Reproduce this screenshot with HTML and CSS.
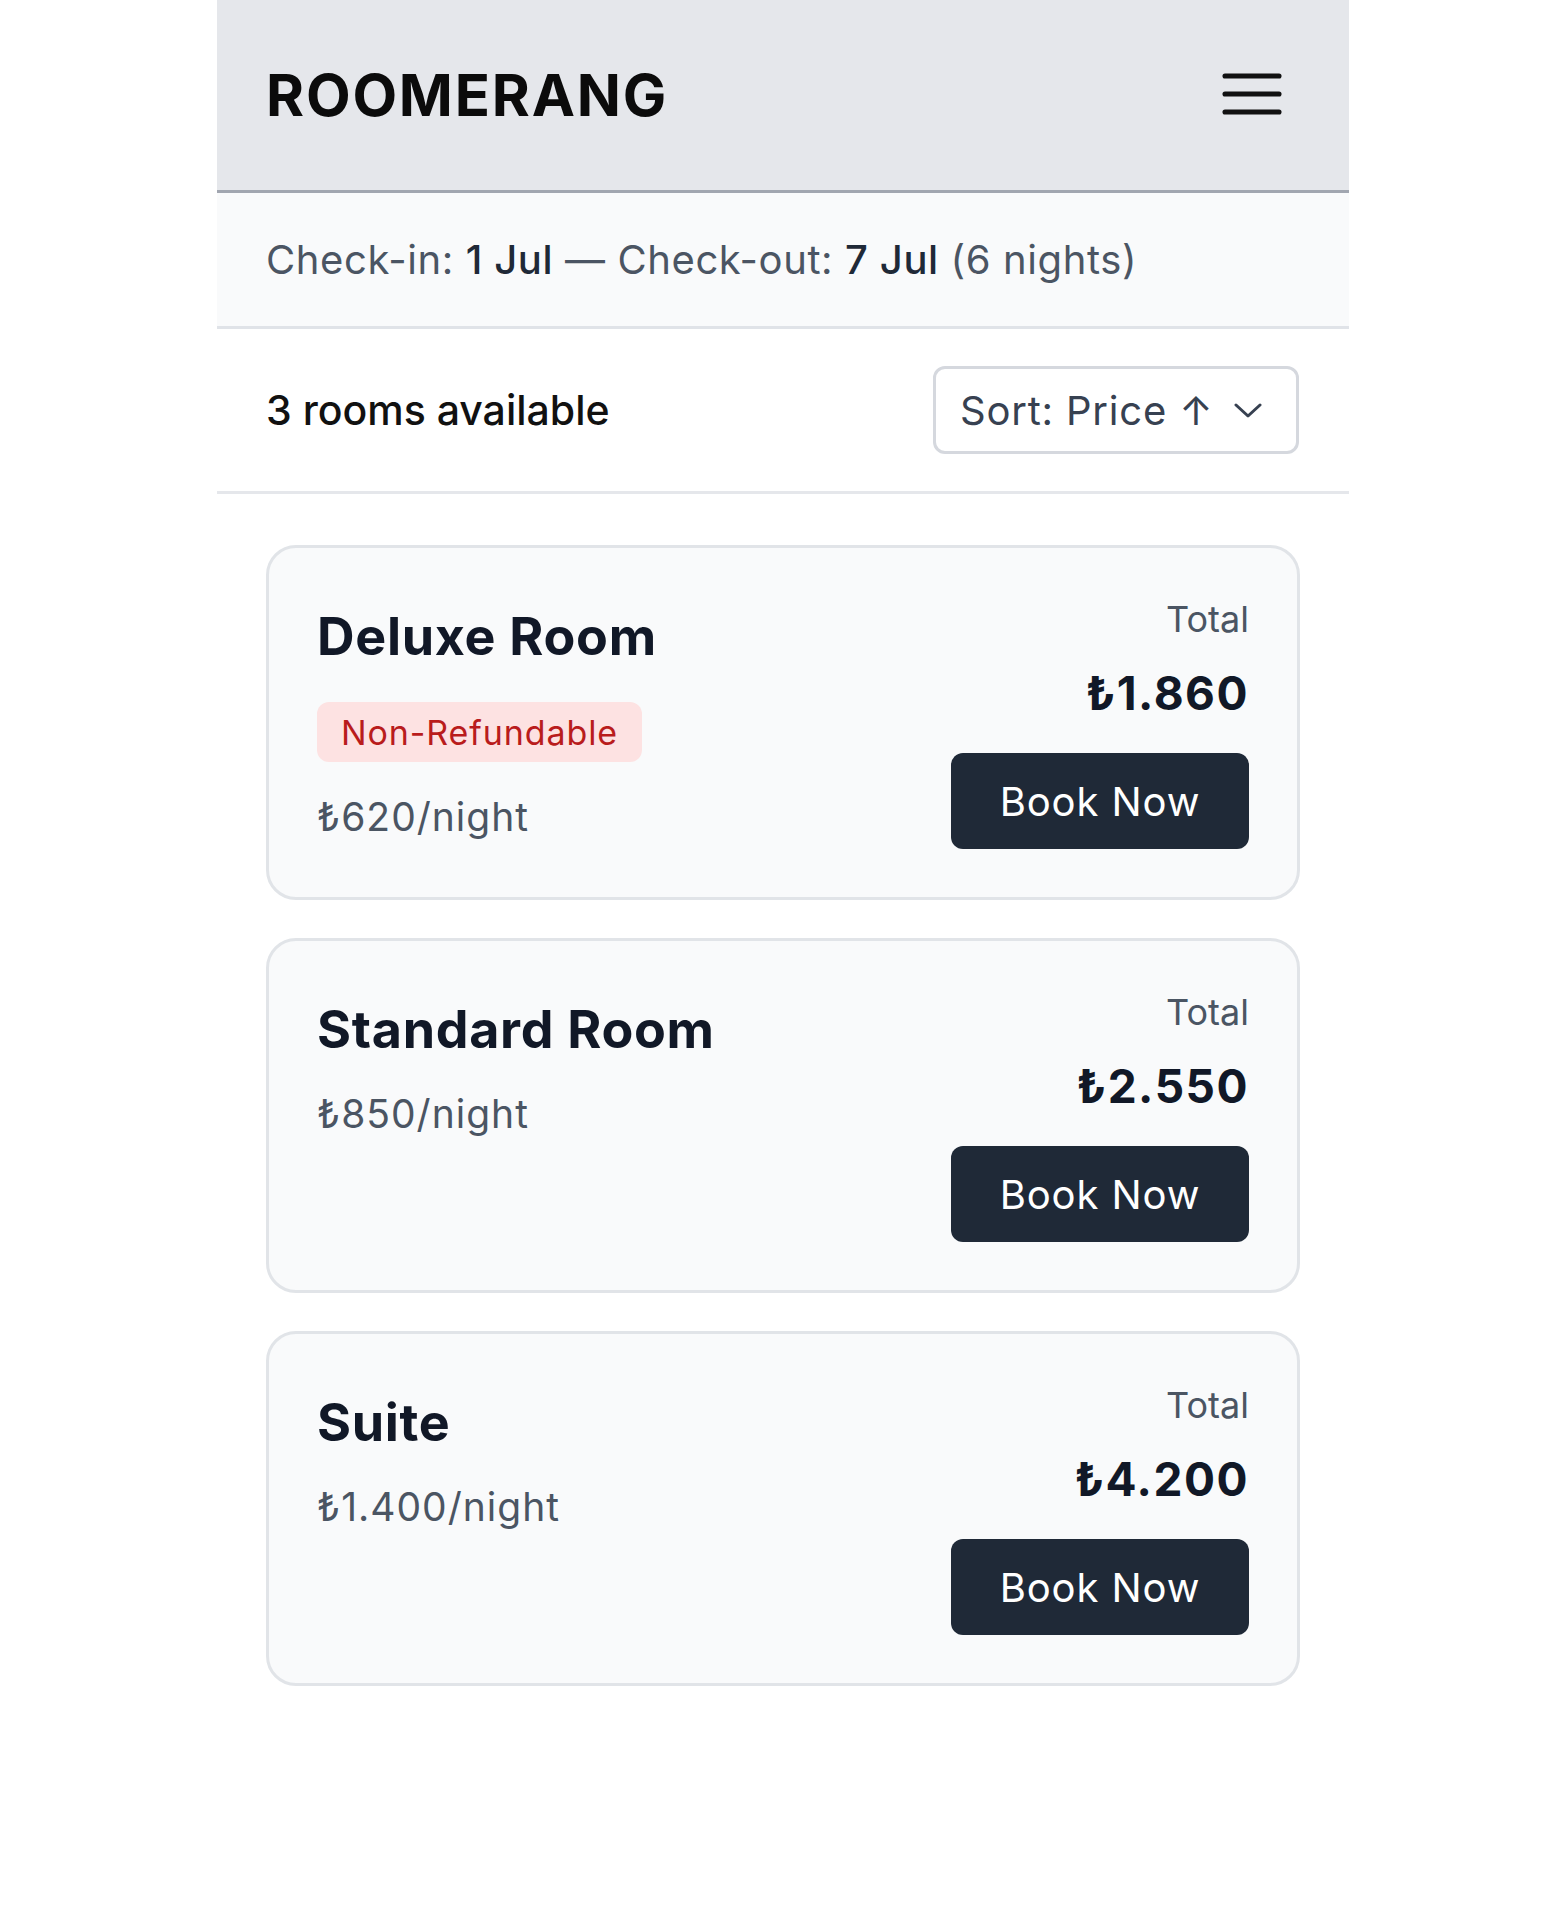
FILE: index.html
```html
<!DOCTYPE html>
<html lang="en">
<head>
<meta charset="utf-8">
<title>Roomerang</title>
<link rel="stylesheet" href="styles.css">
</head>
<body>
<div class="app">
  <header class="topbar">
    <div class="brand">ROOMERANG</div>
    <button class="menu-btn" aria-label="Menu">
      <svg class="menu-icon" viewBox="0 0 24 24" width="72" height="72" fill="none" stroke="#111111" stroke-width="1.7" stroke-linecap="round">
        <line x1="3" y1="6" x2="21" y2="6"/>
        <line x1="3" y1="12" x2="21" y2="12"/>
        <line x1="3" y1="18" x2="21" y2="18"/>
      </svg>
    </button>
  </header>

  <div class="dates">
    <p class="dates-text">Check-in: <strong>1 Jul</strong> — Check-out: <strong>7 Jul</strong> (6 nights)</p>
  </div>

  <div class="toolbar">
    <div class="count">3 rooms available</div>
    <div class="sort">
      <span>Sort: Price ↑</span>
      <svg class="chev" viewBox="0 0 28 16" width="28" height="16" fill="none" stroke="#374151" stroke-width="3" stroke-linecap="round" stroke-linejoin="round">
        <polyline points="2,2 14,13 26,2"/>
      </svg>
    </div>
  </div>

  <main class="rooms">
    <article class="card">
      <div class="info">
        <h2 class="room-name">Deluxe Room</h2>
        <span class="badge">Non-Refundable</span>
        <div class="nightly">₺620/night</div>
      </div>
      <div class="pricing">
        <div class="total-label">Total</div>
        <div class="total">₺1.860</div>
        <button class="book">Book Now</button>
      </div>
    </article>

    <article class="card">
      <div class="info">
        <h2 class="room-name">Standard Room</h2>
        <div class="nightly">₺850/night</div>
      </div>
      <div class="pricing">
        <div class="total-label">Total</div>
        <div class="total">₺2.550</div>
        <button class="book">Book Now</button>
      </div>
    </article>

    <article class="card">
      <div class="info">
        <h2 class="room-name">Suite</h2>
        <div class="nightly">₺1.400/night</div>
      </div>
      <div class="pricing">
        <div class="total-label">Total</div>
        <div class="total">₺4.200</div>
        <button class="book">Book Now</button>
      </div>
    </article>
  </main>
</div>
</body>
</html>
```

FILE: styles.css
```css
* { box-sizing: border-box; }

html, body {
  margin: 0;
  padding: 0;
  background: #ffffff;
}

body {
  font-family: Inter, "Noto Sans", "Liberation Sans", sans-serif;
  color: #111827;
}

.app {
  width: 1132px;
  margin: 0 auto;
}

.topbar {
  height: 193px;
  background: #e5e7eb;
  border-bottom: 3px solid #a1a6b0;
  display: flex;
  align-items: center;
  justify-content: space-between;
  padding: 0 49px;
}

.brand {
  font-size: 58px;
  font-weight: 700;
  color: #0b0b0b;
  letter-spacing: 1.8px;
  line-height: 1;
}

.menu-btn {
  background: none;
  border: 0;
  padding: 0;
  margin: 0 12px 2px 0;
  display: flex;
}

.dates {
  height: 136px;
  background: #f9fafb;
  border-bottom: 3px solid #e0e3e8;
  display: flex;
  align-items: center;
  padding: 0 49px;
}

.dates-text {
  margin: 0;
  font-size: 40px;
  line-height: 1.2;
  color: #4b5563;
  letter-spacing: 0.6px;
}

.dates-text strong {
  font-weight: 500;
  color: #1f2937;
}

.toolbar {
  height: 165px;
  border-bottom: 3px solid #e5e7eb;
  display: flex;
  align-items: center;
  justify-content: space-between;
  padding: 0 50px 0 49px;
}

.count {
  font-size: 41px;
  font-weight: 500;
  color: #111111;
}

.sort {
  width: 366px;
  height: 88px;
  border: 3px solid #d5d8de;
  border-radius: 12px;
  display: flex;
  align-items: center;
  justify-content: space-between;
  padding: 0 34px 0 24px;
  font-size: 40px;
  letter-spacing: 0.8px;
  color: #374151;
  background: #ffffff;
}

.chev { margin-top: 2px; }

.rooms {
  padding: 51px 49px 0;
  display: flex;
  flex-direction: column;
  gap: 38px;
}

.card {
  height: 355px;
  background: #f9fafb;
  border: 3px solid #e1e4e8;
  border-radius: 30px;
  padding: 48px;
  display: flex;
  justify-content: space-between;
  align-items: flex-start;
}

.info {
  display: flex;
  flex-direction: column;
  align-items: flex-start;
}

.room-name {
  margin: 0;
  font-size: 52px;
  line-height: 82px;
  font-weight: 700;
  letter-spacing: 0.7px;
  color: #111827;
}

.badge {
  margin: 24px 0 12px;
  height: 60px;
  display: inline-flex;
  align-items: center;
  padding: 0 24px;
  border-radius: 12px;
  background: #fde2e2;
  color: #b91c1c;
  font-size: 34px;
  letter-spacing: 0.9px;
}

.nightly {
  margin-top: 14px;
  font-size: 39px;
  line-height: 57px;
  letter-spacing: 1px;
  color: #4b5563;
}

.pricing {
  display: flex;
  flex-direction: column;
  align-items: flex-end;
}

.total-label {
  font-size: 36px;
  line-height: 46px;
  color: #4b5563;
}

.total {
  margin-top: 21px;
  font-size: 46px;
  line-height: 60px;
  font-weight: 700;
  letter-spacing: 1.5px;
  color: #111827;
}

.book {
  margin-top: 30px;
  height: 96px;
  width: 298px;
  border: 0;
  border-radius: 12px;
  background: #1f2937;
  color: #ffffff;
  font-family: inherit;
  font-size: 40px;
  font-weight: 400;
  letter-spacing: 0.9px;
  padding: 0;
}
```
